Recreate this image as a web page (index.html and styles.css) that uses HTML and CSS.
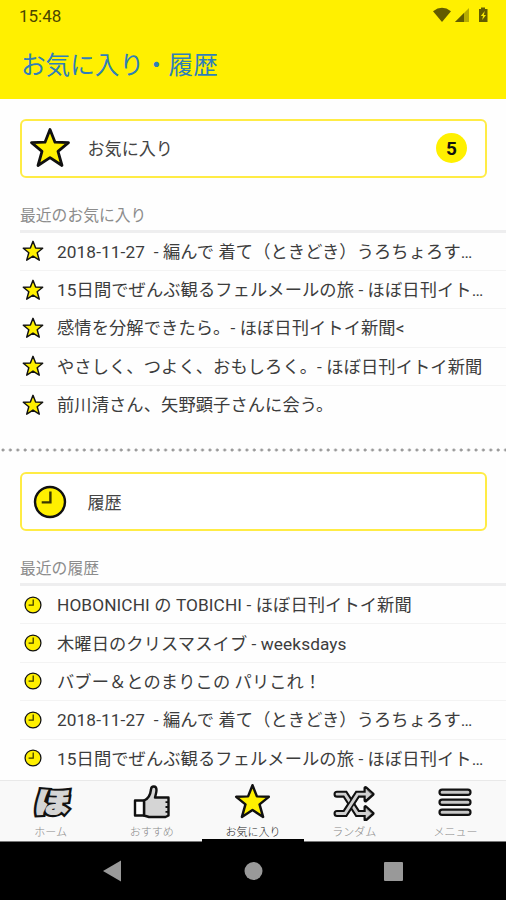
FILE: index.html
```html
<!DOCTYPE html>
<html lang="ja">
<head>
<meta charset="utf-8">
<title>お気に入り・履歴</title>
<link rel="stylesheet" href="styles.css">
</head>
<body>
<svg class="defs" aria-hidden="true">
  <symbol id="star" viewBox="0 0 42 42"><path d="M21 2.5 26 15.2 39.5 15.7 29 24.3 33 38.5 21 30.6 9 38.5 13 24.3 2.5 15.7 16 15.2Z" fill="#fff000" stroke="#111" stroke-width="2.8" stroke-linejoin="round"/></symbol>
  <symbol id="clock" viewBox="0 0 34 34"><circle cx="17" cy="17" r="15" fill="#fff000" stroke="#111" stroke-width="2.4"/><path d="M17.4 6.5v10.9H8.7" fill="none" stroke="#3b3800" stroke-width="2.4"/></symbol>
</svg>
<div class="phone">
  <header class="header">
    <div class="status">
      <span>15:48</span>
      <svg class="status-icons" viewBox="0 0 56 18">
        <path d="M0 4.2Q9 -2.6 18 4.2L9 15Z" fill="#625c00"/>
        <path d="M22 15 36 1V15Z" fill="#b7ad00"/><path d="M22 15 31 6V15Z" fill="#625c00"/>
        <path d="M46 2h2V.5h4V2h2.5v13H46Z" fill="#625c00"/><path d="m51.8 4-4 5h2.2l-.8 4 3.8-5h-2.2Z" fill="#f5e900"/>
      </svg>
    </div>
    <h1>お気に入り・履歴</h1>
  </header>
  <main>
    <section class="favorites">
      <div class="card"><svg class="card-star"><use href="#star"/></svg><span>お気に入り</span><b class="count">5</b></div>
      <h2>最近のお気に入り</h2>
      <ul>
        <li><svg class="row-star"><use href="#star"/></svg><span>2018-11-27&nbsp; - 編んで 着て（ときどき）うろちょろす…</span></li>
        <li><svg class="row-star"><use href="#star"/></svg><span>15日間でぜんぶ観るフェルメールの旅 - ほぼ日刊イト…</span></li>
        <li><svg class="row-star"><use href="#star"/></svg><span>感情を分解できたら。- ほぼ日刊イトイ新聞&lt;</span></li>
        <li><svg class="row-star"><use href="#star"/></svg><span>やさしく、つよく、おもしろく。- ほぼ日刊イトイ新聞</span></li>
        <li><svg class="row-star"><use href="#star"/></svg><span>前川清さん、矢野顕子さんに会う。</span></li>
      </ul>
    </section>
    <div class="dots"></div>
    <section class="history">
      <div class="card"><svg class="card-clock"><use href="#clock"/></svg><span>履歴</span></div>
      <h2>最近の履歴</h2>
      <ul>
        <li><svg class="row-clock"><use href="#clock"/></svg><span>HOBONICHI の TOBICHI - ほぼ日刊イトイ新聞</span></li>
        <li><svg class="row-clock"><use href="#clock"/></svg><span>木曜日のクリスマスイブ - weeksdays</span></li>
        <li><svg class="row-clock"><use href="#clock"/></svg><span>バブー＆とのまりこの パリこれ！</span></li>
        <li><svg class="row-clock"><use href="#clock"/></svg><span>2018-11-27&nbsp; - 編んで 着て（ときどき）うろちょろす…</span></li>
        <li><svg class="row-clock"><use href="#clock"/></svg><span>15日間でぜんぶ観るフェルメールの旅 - ほぼ日刊イト…</span></li>
      </ul>
    </section>
  </main>
  <nav class="tabs">
    <div class="tab">
      <svg class="home-icon" viewBox="0 0 44 38"><g class="logo" transform="translate(4.4 30.4) skewX(-9) scale(1.2 1)"><text class="logo-edge">ほ</text><text class="logo-face">ほ</text></g></svg>
      <span>ホーム</span>
    </div>
    <div class="tab">
      <svg viewBox="0 0 44 38"><path d="M14 17.5C18 16 20.5 11 21 6.5 21.3 2.5 26.5 2.5 26.5 7 26.5 10 25.5 12 25 14.5H38.5V32.5L35.5 34H19L14 32.5Z" fill="#d5d5d5" stroke="#111" stroke-width="2.4" stroke-linejoin="round"/><path d="M5 17.5H14V32.5H5Z" fill="#fff" stroke="#111" stroke-width="2.4" stroke-linejoin="round"/><path d="M35.5 19.2h3M35.5 24h3M35.5 28.8h3" stroke="#111" stroke-width="1.8"/></svg>
      <span>おすすめ</span>
    </div>
    <div class="tab active">
      <svg class="tab-star"><use href="#star"/></svg>
      <span>お気に入り</span>
    </div>
    <div class="tab">
      <svg viewBox="0 0 44 38" fill="none" stroke-linecap="round">
        <g stroke="#111"><path d="M5 11.2H13L25.5 30.5H34" stroke-width="7"/><path d="M5 30.5H13L25.5 11.2H34" stroke-width="7"/><path d="M33.5 5v12.4l7-6.2ZM33.5 24.2v12.4l7-6.2Z" fill="#111" stroke-width="4" stroke-linejoin="round"/></g>
        <g stroke="#d0d0d0"><path d="M5 11.2H13L25.5 30.5H34" stroke-width="2.8"/><path d="M15 27.5 24 13.7" stroke="#111" stroke-width="6" stroke-linecap="butt"/><path d="M5 30.5H13L25.5 11.2H34" stroke-width="2.8"/><path d="M34 6.5v9.4l5.3-4.7ZM34 25.8v9.4l5.3-4.7Z" fill="#d0d0d0" stroke-width=".6"/></g>
      </svg>
      <span>ランダム</span>
    </div>
    <div class="tab">
      <svg viewBox="0 0 44 38"><g fill="#c7c7c7" stroke="#111" stroke-width="2.2"><rect x="6.5" y="6.7" width="31" height="5.2" rx="2.6"/><rect x="6.5" y="16.7" width="31" height="5.2" rx="2.6"/><rect x="6.5" y="26.7" width="31" height="5.2" rx="2.6"/></g></svg>
      <span>メニュー</span>
    </div>
  </nav>
  <footer class="system">
    <svg viewBox="0 0 506 58"><path d="M103 29 121 18.5V39.5Z" fill="#999"/><circle cx="253.5" cy="29" r="9" fill="#999"/><rect x="384" y="20" width="19" height="19" rx="1" fill="#999"/></svg>
  </footer>
</div>
</body>
</html>
```

FILE: styles.css
```css
* { box-sizing: border-box; }
body { margin: 0; background: #fff; font-family: Roboto, "Noto Sans CJK JP", sans-serif; }
.defs { position: absolute; width: 0; height: 0; }
.phone { width: 506px; height: 900px; display: flex; flex-direction: column; overflow: hidden; background: #fefefe; }
svg { display: block; flex: none; }

.header { height: 98.5px; flex: none; background: #fff000; }
.status { height: 32px; padding: 0 14px 0 19px; display: flex; align-items: center; justify-content: space-between; font-size: 17px; font-weight: 400; color: #4c4700; }
.status-icons { width: 56px; height: 18px; margin-right: 3px; }
h1 { margin: 16px 0 0 21px; font-size: 24.6px; line-height: 36px; font-weight: 400; color: #2f7fb8; white-space: nowrap; }

main { height: 681.5px; flex: none; overflow: hidden; }
section { padding-left: 20px; }
.favorites { height: 349.5px; padding-top: 20px; }
.history { padding-top: 20px; }
.card { width: 467px; height: 59px; border: 2px solid #ffec45; border-radius: 6px; display: flex; align-items: center; font-size: 17.1px; font-weight: 400; color: #444; background: #fff; }
.card > span { margin-top: -1px; }
.card-star { width: 42px; height: 42px; margin: 0 16.5px 0 7px; }
.card-clock { width: 34px; height: 34px; margin: 0 20.5px 0 11px; }
.count { width: 31px; height: 30px; margin: 0 18px 0 auto; border-radius: 50%; background: #fff000; text-align: center; font-size: 19px; line-height: 31px; font-weight: 700; color: #111; }
h2 { margin: 26px 0 0 0; height: 24px; font-size: 15.8px; line-height: 24px; font-weight: 400; color: #8c8c8c; }
ul { list-style: none; margin: 2px 0 0; padding: 0; border-top: 3px solid #eeeeef; }
li { height: 38.4px; display: flex; align-items: center; font-size: 17.25px; letter-spacing: .09px; font-weight: 400; color: #3c3c3c; white-space: nowrap; border-bottom: 1.5px solid #f3f3f3; }
li > span { margin-top: -2px; }
li:last-child { border-color: transparent; }
.row-star { width: 22px; height: 22px; margin: 0 13px 0 2px; }
.row-clock { width: 18px; height: 18px; margin: 0 15px 0 4px; }
.dots { height: 4px; background: radial-gradient(circle at 2px 2px, #999 1.1px, transparent 1.9px) 1px 0 / 7.4px 4px repeat-x; }

.tabs { height: 62px; flex: none; display: grid; grid-template-columns: repeat(5, 1fr); background: #f9f9f9; border-top: 1px solid #e9e9e9; border-bottom: 1px solid #777; }
.tab { height: 61px; display: flex; flex-direction: column; align-items: center; padding-top: 2px; font-size: 11px; line-height: 16px; font-weight: 300; color: #888; border-bottom: 3px solid transparent; }
.tab svg { width: 44px; height: 38px; margin-bottom: 4px; }
.tab .tab-star { width: 37px; height: 37px; margin-bottom: 5px; }
.active { color: #222; border-color: #000; }
.home-icon { overflow: visible; }
.logo { font-family: "Noto Sans CJK JP"; font-size: 29px; font-weight: 900; }
.logo-edge { fill: #111; stroke: #111; stroke-width: 5.4px; stroke-linejoin: miter; }
.logo-face { fill: #d5d5d5; stroke: #d5d5d5; stroke-width: 1.2px; }
.system { height: 58px; flex: none; background: #000; }
.system svg { width: 506px; height: 58px; }
```
